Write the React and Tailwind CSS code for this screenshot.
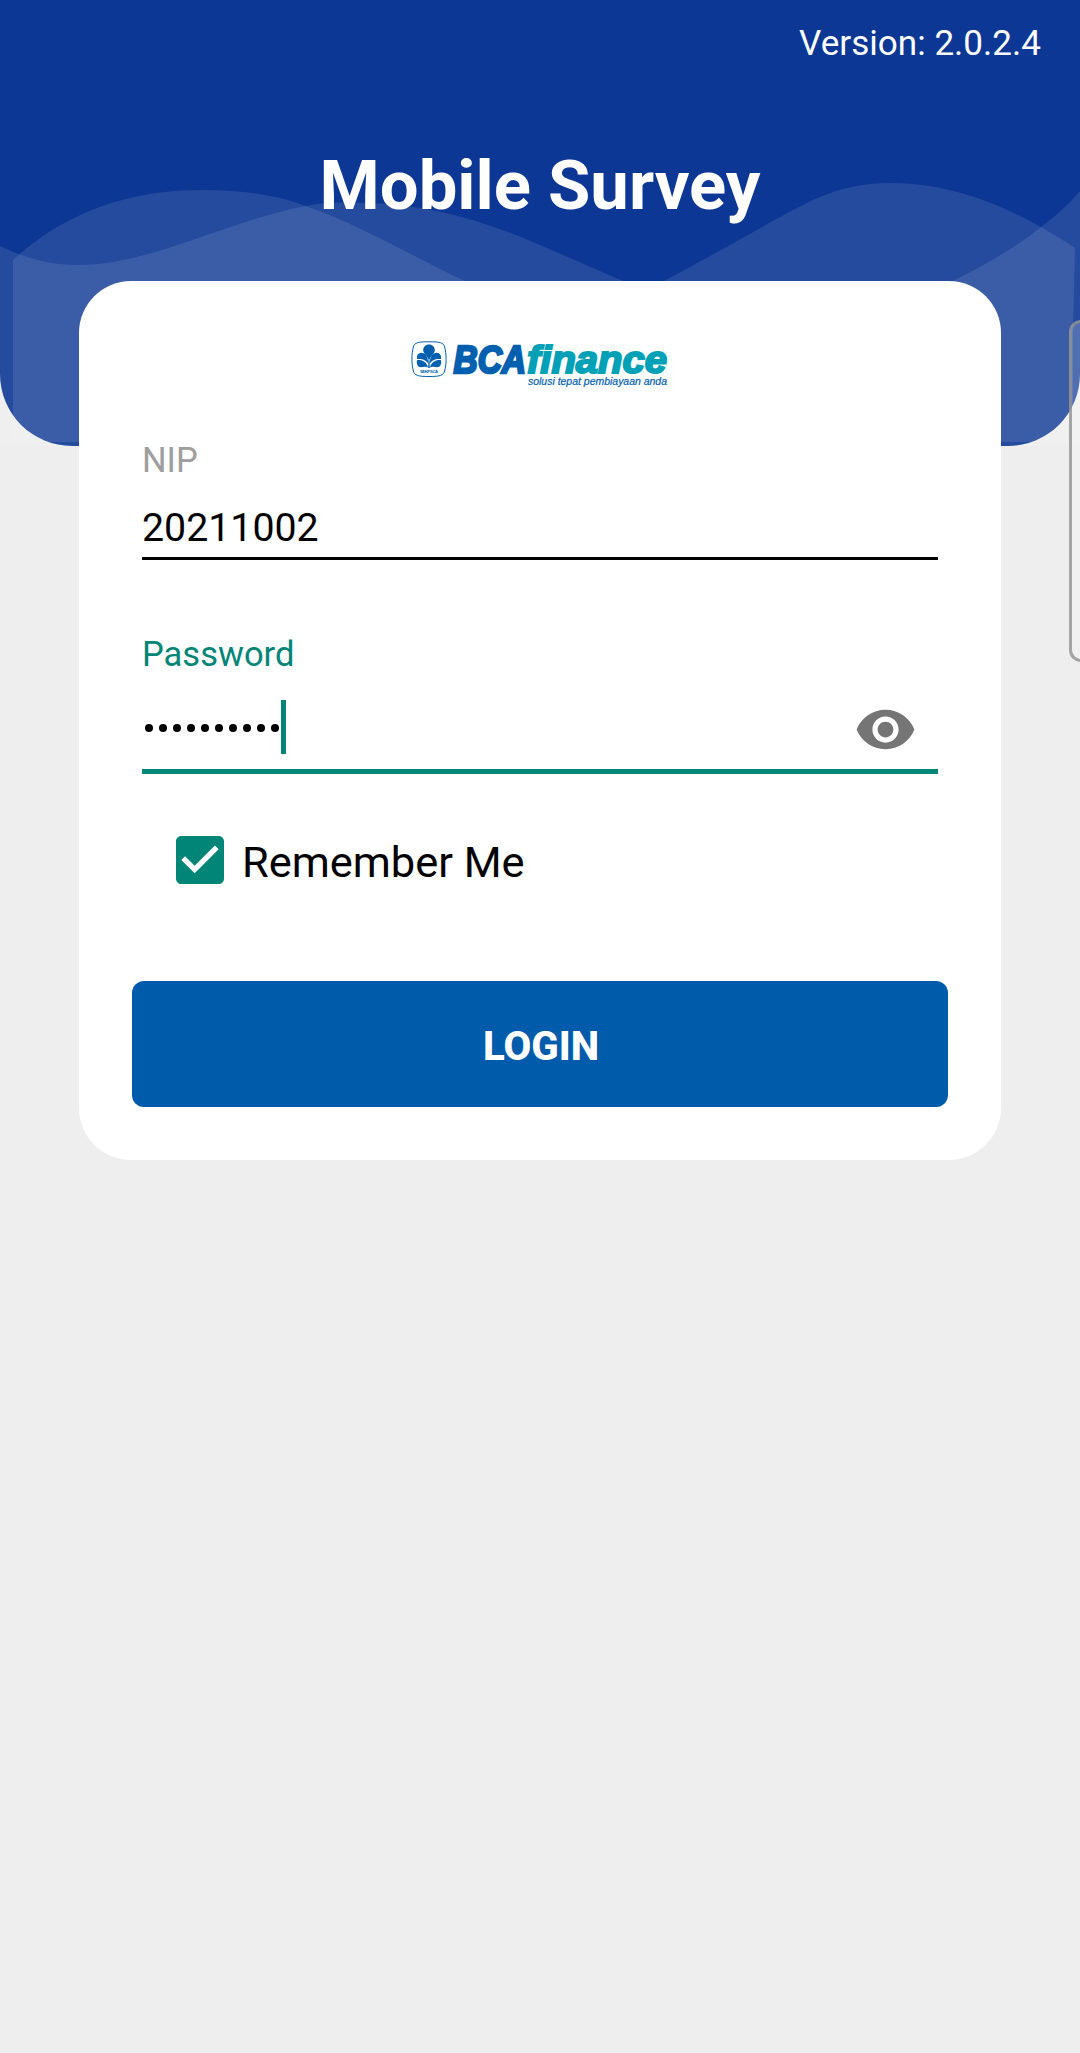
function Waves() {
  return (
    <svg className="absolute inset-0 h-[446px] w-full" viewBox="0 0 1080 446" fill="#fff" fillOpacity="0.1" aria-hidden="true">
      <path d="M13 442V260C65 212 130 190 200 190C260 190 290 200 306 206C365 227 415 258 465 281C535 312 600 315 664 281C740 241 800 203 828 194C846 187 866 183 890 183C955 183 1015 208 1075 248L1073 330V442Z" />
      <path d="M0 246C25 258 50 265 78 265C150 265 220 223 306 206C328 201 348 203 370 203C430 205 485 221 540 245L623 281C735 330 855 330 953 281C985 265 1018 246 1041 227C1056 216 1070 203 1080 191V446H0Z" />
    </svg>
  );
}

function Logo() {
  return (
    <svg className="h-[60px] w-[280px]" viewBox="400 330 280 60" fontFamily="'Liberation Sans', Arial, sans-serif" role="img" aria-label="BCA finance">
      <path d="M429 340.8C440 340.8 443.5 341.5 444.6 346C446.6 353 446.6 363 444.6 370C443.5 374.500 440 375.500 429 375.500C418 375.500 414.500 374.500 413.400 370C411.400 363 411.400 353 413.400 346C414.500 341.500 418 340.800 429 340.800Z" fill="#fff" stroke="#0060af" strokeWidth="1" />
      <g fill="#0060af">
        <path d="M429 343.500C432.500 343.500 434.800 346 434.800 349C434.800 352.500 431.500 354 429.700 358H428.300C426.500 354 423.200 352.500 423.200 349C423.200 346 425.500 343.500 429 343.500Z" />
        <path d="M428.400 363C427.800 355 425.500 352 421.500 351.800C418 352 416.500 354.500 417 358C421.500 357.500 426 358.500 428.400 363Z" />
        <path d="M429.600 363C430.200 355 432.500 352 436.500 351.800C440 352 441.500 354.500 441 358C436.500 357.500 432 358.500 429.600 363Z" />
        <path d="M417 359.200C421.500 358.500 426.500 360.500 428 366.500C424 364.500 421.500 367.500 418.500 365.500C416.800 364 416.500 361.500 417 359.200Z" />
        <path d="M441 359.200C436.500 358.500 431.500 360.500 430 366.500C434 364.500 436.500 367.500 439.500 365.500C441.200 364 441.500 361.500 441 359.200Z" />
        <path d="M428.500 357H429.500L429.800 367H428.200Z" />
      </g>
      <text x="420" y="372.200" fontSize="4.200" fontWeight="700" fill="#0060af" textLength="18">SEKP SCA</text>
      <text x="453.500" y="371.500" fontSize="38.500" fontWeight="700" fontStyle="italic" fill="#0060af" stroke="#0060af" strokeWidth="2.600" textLength="72.500" lengthAdjust="spacingAndGlyphs">BCA</text>
      <text x="527" y="371.500" fontSize="38" fontWeight="700" fontStyle="italic" fill="#00a1b7" stroke="#00a1b7" strokeWidth="2" textLength="140" lengthAdjust="spacingAndGlyphs">finance</text>
      <text x="528" y="383.500" fontSize="10.800" fontStyle="italic" fill="#0060af" stroke="#0060af" strokeWidth="0.200" textLength="139" lengthAdjust="spacingAndGlyphs">solusi tepat pembiayaan anda</text>
    </svg>
  );
}

export default function App() {
  return (
    <div className="relative h-[2053px] w-[1080px] overflow-hidden bg-[#eeeeee] font-['Roboto',sans-serif] text-black">
      <div className="absolute inset-x-0 top-0 h-[446px] rounded-b-[72px] bg-[#0d3794]" />
      <Waves />

      <header className="relative flex h-[281px] flex-col text-white">
        <div className="mt-[22px] mr-[39px] text-right text-[35.100px] leading-[42px]">Version: 2.0.2.4</div>
        <h1 className="mt-[82px] text-center text-[68.800px] leading-[80px] font-bold">Mobile Survey</h1>
      </header>

      <main className="relative mx-[79px] flex h-[879px] flex-col rounded-[52px] bg-white">
        <div className="mt-[50px] flex justify-center">
          <Logo />
        </div>

        <div className="mx-[63px] mt-[48px] flex flex-col">
          <label className="text-[34.500px] leading-[42px] text-[#9e9e9e]">NIP</label>
          <div className="mt-[23px] text-[39.300px] leading-[48px]">20211002</div>
          <div className="mt-[5px] h-[3px] bg-black" />
        </div>

        <div className="mx-[63px] mt-[73px] flex flex-col">
          <label className="text-[34.500px] leading-[42px] text-[#008577]">Password</label>
          <div className="mt-[23px] flex h-[63px] items-center">
            <div className="mb-[3px] flex gap-[6px] pl-[3px]">
              {Array.from({ length: 10 }, (_, i) => (
                <span key={i} className="size-2 rounded-full bg-black" />
              ))}
            </div>
            <div className="mb-[5px] ml-[2px] h-[54px] w-[5px] bg-[#008577]" />
            <svg className="mr-[21px] ml-auto size-[63px]" viewBox="0 0 24 24" fill="#757575" aria-hidden="true">
              <path d="M12 4.500C7 4.500 2.730 7.610 1 12c1.730 4.390 6 7.500 11 7.500s9.270-3.110 11-7.500c-1.730-4.390-6-7.500-11-7.500zM12 17c-2.760 0-5-2.240-5-5s2.240-5 5-5 5 2.240 5 5-2.240 5-5 5zm0-8c-1.660 0-3 1.340-3 3s1.340 3 3 3 3-1.340 3-3-1.340-3-3-3z" />
            </svg>
          </div>
          <div className="mt-[8px] h-[5px] bg-[#008577]" />
        </div>

        <label className="mt-[54px] ml-[89px] flex h-16 items-center">
          <svg className="size-16 shrink-0" viewBox="0 0 24 24" fill="#008577" aria-hidden="true">
            <path d="M19 3H5c-1.110 0-2 .9-2 2v14c0 1.100.89 2 2 2h14c1.110 0 2-.9 2-2V5c0-1.100-.89-2-2-2zm-9 14l-5-5 1.410-1.410L10 14.170l7.590-7.590L19 8l-9 9z" />
          </svg>
          <span className="mt-[5px] ml-[10px] text-[43.400px] leading-[50px]">Remember Me</span>
        </label>

        <button className="mx-[53px] mt-[89px] flex h-[126px] items-center justify-center rounded-[12px] bg-[#005bab] pt-[5px] pl-[2px] text-[40.300px] leading-[48px] font-extrabold text-white">
          LOGIN
        </button>
      </main>

      <div className="absolute top-[320px] -right-5 h-[342px] w-[31px] rounded-[12px] border-[3px] border-[#909090]/80 bg-white/20" />
    </div>
  );
}
